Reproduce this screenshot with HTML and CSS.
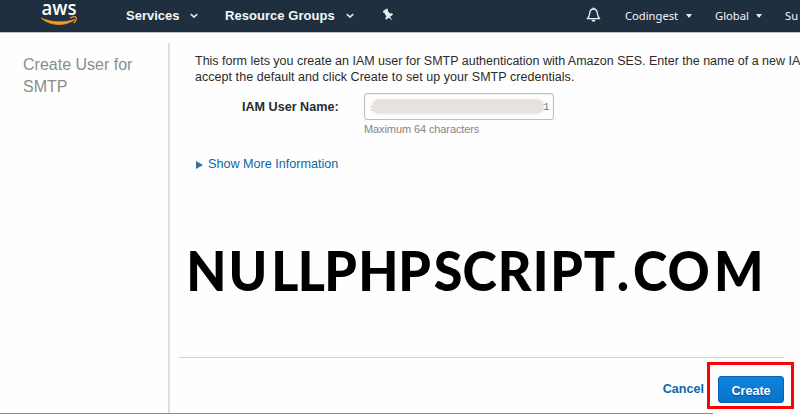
FILE: index.html
```html
<!DOCTYPE html>
<html lang="en">
<head>
<meta charset="utf-8">
<title>Create User for SMTP</title>
<link rel="stylesheet" href="styles.css">
</head>
<body>
<header class="topbar">
  <svg class="logo" width="40" height="32" viewBox="0 0 40 32">
    <text class="logo-text" x="1.5" y="14.6" textLength="35" lengthAdjust="spacingAndGlyphs">aws</text>
    <path d="M1.300 18.200C10 25.800 24 26.500 34 20.200l.5-.7C24 23.300 11 22.300 1.300 18.200z" fill="#f39a1e" stroke="#f39a1e" stroke-width=".8" stroke-linejoin="round"/>
    <path d="M30.500 17.800c2-.9 5-1.300 5.600-.5s-.5 3.400-2 5.400" fill="none" stroke="#f39a1e" stroke-width="1.300" stroke-linecap="round"/>
  </svg>
  <nav class="menu">
    <span class="menu-services">Services</span>
    <svg class="chev" width="8" height="6" viewBox="0 0 8 6"><path d="M.8 1.200l3.200 3 3.200-3"/></svg>
    <span class="menu-groups">Resource Groups</span>
    <svg class="chev" width="8" height="6" viewBox="0 0 8 6"><path d="M.8 1.200l3.200 3 3.200-3"/></svg>
    <svg class="pin" width="12" height="13" viewBox="0 0 12 13"><path d="M1 3L5 .4l1 1.200-.3 1.200 2.200 2.700 2.200-.3 1 1.300-3 2.200 2.300 3.700-3.500-2.700-2.900 2-.7-1.500 1-1.700-1.700-3.200-1.300-.5z" fill="#e8ecef"/></svg>
  </nav>
  <div class="account">
    <svg class="bell" width="15" height="16" viewBox="0 0 15 16"><path d="M1.300 11.700c2-1.700 2.200-3 2.400-5.500C3.900 3.400 5.300 2 7.500 2s3.600 1.400 3.800 4.200c.2 2.500.4 3.800 2.400 5.500z" fill="none" stroke="#eef1f3" stroke-width="1.300" stroke-linejoin="round"/><path d="M7.500.6V2" stroke="#eef1f3" stroke-width="1.600"/><path d="M5.500 12.700h4a2 2 0 0 1-4 0z" fill="#eef1f3"/></svg>
    <span class="acct-name">Codingest</span><i class="caret"></i>
    <span class="acct-region">Global</span><i class="caret"></i>
    <span class="acct-support">Su</span>
  </div>
</header>
<div class="page">
  <aside class="side"><h1>Create User for<br>SMTP</h1></aside>
  <main class="content">
    <p class="intro"><span class="line-a">This form lets you create an IAM user for SMTP authentication with Amazon SES. Enter the name of a new IA</span><br><span class="line-b">accept the default and click Create to set up your SMTP credentials.</span></p>
    <div class="field">
      <label>IAM User Name:</label>
      <div>
        <div class="input"><span class="first">s</span><span class="redacted"></span><span class="last">1</span></div>
        <div class="hint">Maximum 64 characters</div>
      </div>
    </div>
    <div class="more"><i class="tri"></i><span>Show More Information</span></div>
    <footer class="actions">
      <a class="cancel">Cancel</a>
      <div class="highlight"><button class="create">Create</button></div>
    </footer>
  </main>
</div>
<svg class="watermark" width="600" height="60" viewBox="0 0 600 60"><text transform="scale(.93 1)" y="51" x="3.500 49 95 123.500 152 188.500 231.500 269.500 300.500 338.500 376 395 431 466.500 484 521 571">NULLPHPSCRIPT.COM</text></svg>
<div class="edge"></div>
</body>
</html>
```
FILE: styles.css
```css
* { box-sizing: border-box; }
body {
  margin: 0;
  width: 800px;
  height: 414px;
  overflow: hidden;
  position: relative;
  background: #fefefe;
  color: #2b2b2b;
  font: 13px/16px "Liberation Sans", Arial, sans-serif;
}
.topbar {
  height: 33px;
  display: flex;
  background: #202f40;
  border-bottom: 1px solid #b9c0c8;
  color: #f5f7f8;
  overflow: hidden;
  white-space: nowrap;
}
.logo { margin-left: 40px; flex: none; }
.logo-text { font: 600 20px "Open Sans", sans-serif; fill: #fff; }
.menu { display: flex; align-items: center; height: 31px; margin-left: 46px; font-weight: bold; width: 466px; flex: none; }
.menu-services { width: 64px; }
.menu-groups { width: 121px; margin-left: 27px; letter-spacing: .05px; }
.chev { fill: none; stroke: #dce2e7; stroke-width: 1.700; margin-top: 1px; }
.pin { margin-left: 28px; margin-top: -3px; }
.account { display: flex; align-items: center; height: 31px; flex: none; margin-left: -6px; font: 11.200px "Noto Sans", sans-serif; }
.bell { margin-top: -1px; }
.acct-name { width: 61px; margin-left: 24px; }
.acct-region { width: 41px; margin-left: 23px; }
.acct-support { margin-left: 23px; }
.caret { border: 3.500px solid transparent; border-top: 4px solid #e6eaed; border-bottom: 0; }
.page { display: flex; height: 381px; }
.side { width: 168px; padding: 21px 0 0 23px; }
.side h1 { margin: 0; font: 16px/22px "Liberation Sans", Arial, sans-serif; color: #8c8c8c; }
.content { flex: 1; min-width: 0; padding: 20px 0 0 27px; position: relative; }
.content::before { content: ""; position: absolute; left: 0; top: 10px; bottom: 0; width: 2px; background: #dedede; }
.intro { margin: 0; white-space: nowrap; font-size: 12.500px; }
.line-a { letter-spacing: -.01px; }
.line-b { letter-spacing: .045px; }
.field { display: flex; margin-top: 8px; }
.field label { width: 169px; padding-left: 47px; line-height: 29px; font-weight: bold; font-size: 12.600px; }
.input { width: 190px; height: 27px; border: 1px solid #bdbdbd; border-radius: 3px; display: flex; align-items: center; padding: 0 5px; box-shadow: inset 0 1px 2px #eee; }
.first { color: #ccc; width: 3px; font-size: 11px; flex: none; }
.redacted { width: 170px; height: 13px; border-radius: 6px; background: #e8e1df; box-shadow: 0 0 2px 1px #e8e1df; flex: none; }
.last { color: #777; font: 11px "Liberation Mono", monospace; }
.hint { color: #858585; font-size: 11px; line-height: 16px; margin-top: 1px; letter-spacing: -.1px; }
.more { display: flex; align-items: center; margin-top: 19px; color: #0b67a9; font-size: 12.600px; }
.tri { border: 4px solid transparent; border-left: 7px solid #3b6f96; border-right: 0; margin: 2px 5px 0 1px; }
.actions { position: absolute; left: 11px; right: 16px; bottom: 0; height: 57px; border-top: 1px solid #d2d2d2; display: flex; justify-content: flex-end; }
.cancel { font-weight: bold; font-size: 12.600px; color: #0a66b0; line-height: 62px; margin-right: 3px; }
.highlight { width: 87px; height: 47px; margin: 4px -10px 0 0; border: 3px solid #fb0007; padding: 11px 0 0 8px; flex: none; }
.create { display: block; width: 66px; height: 27px; padding: 2px 0 0; border: 1px solid #0662b2; border-radius: 3px; background: linear-gradient(#0e84dd, #0872c9); color: #fff; font: bold 12.600px "Liberation Sans", Arial, sans-serif; text-shadow: 0 1px 1px #034a8a; }
.watermark { position: absolute; left: 183px; top: 240px; }
.watermark text { font: 900 56px Lato, sans-serif; fill: #000; }
.edge { position: absolute; left: 0; bottom: 0; width: 713px; height: 1px; background: #8b8b8b; }
```
